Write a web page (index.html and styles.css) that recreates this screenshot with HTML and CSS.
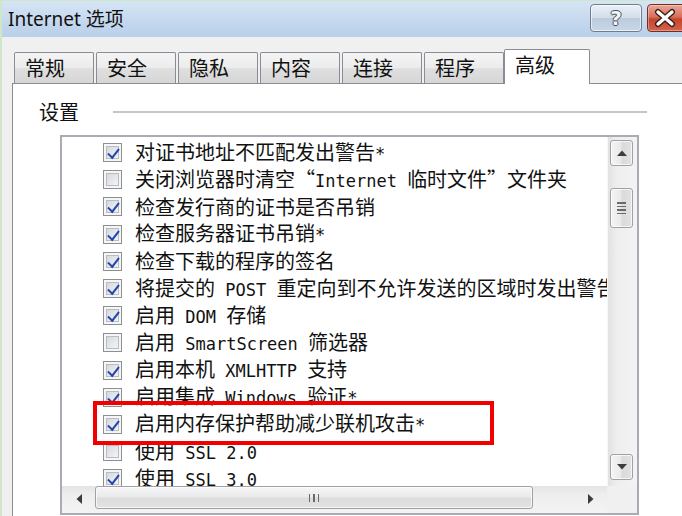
FILE: index.html
```html
<!DOCTYPE html>
<html lang="zh-CN">
<head>
<meta charset="utf-8">
<title>Internet 选项</title>
<link rel="stylesheet" href="styles.css">
</head>
<body>
<div class="window">
  <div class="titlebar">
    <span class="title">Internet 选项</span>
    <div class="caption-btns">
      <div class="cbtn help">?</div>
      <div class="cbtn close">
        <svg width="26" height="20" viewBox="0 0 26 20"><path d="M6 4 L20 16 M20 4 L6 16" stroke="#3a1a14" stroke-width="6" stroke-linecap="round"/><path d="M6 4 L20 16 M20 4 L6 16" stroke="#ffffff" stroke-width="3.4" stroke-linecap="round"/></svg>
      </div>
    </div>
  </div>
  <div class="content">
    <div class="tabs">
      <div class="tab">常规</div>
      <div class="tab">安全</div>
      <div class="tab">隐私</div>
      <div class="tab">内容</div>
      <div class="tab">连接</div>
      <div class="tab">程序</div>
      <div class="tab active">高级</div>
    </div>
    <div class="panel">
      <div class="group-head"><span class="group-label">设置</span><div class="rule"></div></div>
      <div class="listbox">
        <div class="items">
          <div class="row"><span class="cb on"></span><span class="t">对证书地址不匹配发出警告<span class="m">*</span></span></div>
          <div class="row"><span class="cb"></span><span class="t">关闭浏览器时清空“<span class="m">Internet </span>临时文件”文件夹</span></div>
          <div class="row"><span class="cb on"></span><span class="t">检查发行商的证书是否吊销</span></div>
          <div class="row"><span class="cb on"></span><span class="t">检查服务器证书吊销<span class="m">*</span></span></div>
          <div class="row"><span class="cb on"></span><span class="t">检查下载的程序的签名</span></div>
          <div class="row"><span class="cb on"></span><span class="t">将提交的<span class="m"> POST </span>重定向到不允许发送的区域时发出警告</span></div>
          <div class="row"><span class="cb on"></span><span class="t">启用<span class="m"> DOM </span>存储</span></div>
          <div class="row"><span class="cb"></span><span class="t">启用<span class="m"> SmartScreen </span>筛选器</span></div>
          <div class="row"><span class="cb on"></span><span class="t">启用本机<span class="m"> XMLHTTP </span>支持</span></div>
          <div class="row"><span class="cb on"></span><span class="t">启用集成<span class="m"> Windows </span>验证<span class="m">*</span></span></div>
          <div class="row"><span class="cb on"></span><span class="t">启用内存保护帮助减少联机攻击<span class="m">*</span></span></div>
          <div class="row"><span class="cb"></span><span class="t">使用<span class="m"> SSL 2.0</span></span></div>
          <div class="row"><span class="cb on"></span><span class="t">使用<span class="m"> SSL 3.0</span></span></div>
        </div>
        <div class="vscroll">
          <div class="sbtn vbtn"><svg width="12" height="8" viewBox="0 0 12 8"><path d="M1 7 L6 1.5 L11 7 Z" fill="#3c3c3c"/></svg></div>
          <div class="vthumb"><span></span><span></span><span></span><span></span></div>
          <div class="vfill"></div>
          <div class="sbtn vbtn"><svg width="12" height="8" viewBox="0 0 12 8"><path d="M1 1 L6 6.5 L11 1 Z" fill="#3c3c3c"/></svg></div>
        </div>
        <div class="hscroll">
          <div class="harrow"><svg width="8" height="12" viewBox="0 0 8 12"><path d="M7 1 L1.5 6 L7 11 Z" fill="#3c3c3c"/></svg></div>
          <div class="hthumb"><span></span><span></span><span></span></div>
          <div class="hfill"></div>
          <div class="harrow"><svg width="8" height="12" viewBox="0 0 8 12"><path d="M1 1 L6.5 6 L1 11 Z" fill="#3c3c3c"/></svg></div>
        </div>
        <div class="corner"></div>
        <div class="highlight"></div>
      </div>
    </div>
  </div>
</div>
</body>
</html>
```
FILE: styles.css
```css
* { box-sizing: border-box; margin: 0; padding: 0; }
html, body { width: 682px; height: 516px; overflow: hidden; }
body { background: #f0f0f0; font-family: "Noto Sans CJK SC", sans-serif; color: #000; }

.window {
  width: 682px; height: 516px;
  border-top: 1px solid #cfe6c9;
  border-left: 2px solid #cfe6c9;
  display: flex; flex-direction: column;
  overflow: hidden;
}

.titlebar {
  flex: none; height: 36px;
  background: linear-gradient(#d6e5f5, #c3d7ed 60%, #b9d0ea);
  display: flex; justify-content: space-between; align-items: flex-start;
}
.title {
  font-family: "Noto Sans", "Noto Sans CJK SC", sans-serif;
  font-size: 19px; line-height: 36px; padding-left: 6px; color: #111;
}
.caption-btns { display: flex; gap: 5px; margin-top: 3px; margin-right: -27px; }
.cbtn {
  height: 28px; border-radius: 4px;
  display: flex; align-items: center; justify-content: center;
}
.help {
  width: 52px;
  border: 1px solid #6f7d91;
  background: linear-gradient(#eaf0f7, #d3deea 48%, #bccbdd 52%, #c9d7e8);
  box-shadow: inset 0 0 0 1px rgba(255,255,255,0.6);
  font-family: "DejaVu Sans", sans-serif; font-weight: bold; font-size: 20px;
  color: #f4f4f4;
  text-shadow: 1px 0 0 #45505e, -1px 0 0 #45505e, 0 1px 0 #45505e, 0 -1px 0 #45505e;
}
.close {
  width: 62px;
  border: 1px solid #7a2a1e;
  background: linear-gradient(#e9a898, #d7705a 45%, #c5442c 55%, #d2654a);
  box-shadow: inset 0 0 0 1px rgba(255,255,255,0.35);
  justify-content: flex-start; padding-left: 4px;
}

.content { flex: 1; padding-top: 12px; padding-left: 10px; display: flex; flex-direction: column; }

.tabs { display: flex; align-items: flex-end; gap: 2px; padding-left: 2px; height: 34px; flex: none; }
.tab {
  width: 80px; height: 31px;
  border: 1px solid #898c95; border-bottom: none;
  border-radius: 2px 2px 0 0;
  background: linear-gradient(#f4f4f4, #ececec 50%, #dfdfdf 52%, #d6d6d6);
  font-size: 20px; line-height: 29px; padding-left: 10px;
  color: #111;
}
.tab.active {
  width: 86px; height: 35px; margin: 0 -2px -1px;
  background: #fff; position: relative; z-index: 1;
  line-height: 30px;
}

.panel {
  flex: 1; width: 720px;
  background: #fff;
  border-top: 1px solid #898c95;
  border-left: 1px solid #898c95;
  padding-top: 16px;
}
.group-head { display: flex; align-items: center; height: 24px; }
.group-label { font-size: 20px; line-height: 24px; margin-left: 26px; color: #111; }
.rule { width: 534px; height: 2px; background: #c6c6c6; margin-left: 34px; }

.listbox {
  position: relative;
  margin-top: 11px; margin-left: 47px;
  width: 579px; height: 380px;
  border: 2px solid #a9adb3;
  display: grid;
  grid-template-columns: 1fr 30px;
  grid-template-rows: 1fr 27px;
  overflow: hidden;
}
.items { padding-top: 2px; overflow: hidden; }
.row { height: 27.2px; display: flex; align-items: center; white-space: nowrap; }
.cb {
  flex: none; width: 19px; height: 19px; margin-left: 41px; margin-right: 13px;
  border: 1px solid #8e8f8f;
  background: linear-gradient(135deg, #cdd1d7, #e9ebee 60%, #f8f8f8);
  box-shadow: inset 0 0 0 2px #f6f6f6, inset 0 0 0 3px #b7bcc3;
  position: relative;
}
.cb.on::after {
  content: ""; position: absolute;
  width: 5px; height: 10px;
  border-right: 2.5px solid #2445ad; border-bottom: 2.5px solid #2445ad;
  transform: rotate(38deg) skewY(6deg);
  transform-origin: center;
  left: 6px; top: 2px;
}
.t { font-size: 20px; line-height: 26px; color: #111; }
.m { font-family: "DejaVu Sans Mono", monospace; font-size: 17px; white-space: pre; }

.vscroll {
  grid-column: 2; grid-row: 1;
  background: linear-gradient(to right, #e2e2e2, #eeeeee 30%, #f3f3f3);
  border-left: 1px solid #f7f7f7;
  display: flex; flex-direction: column;
  padding: 3px 4px 6px 2px;
}
.sbtn {
  border: 1px solid #9ea2a8; border-radius: 3px;
  background: linear-gradient(to right, #f5f5f5, #e9e9e9 45%, #dadada 55%, #e2e2e2);
  box-shadow: inset 0 0 0 1px rgba(255,255,255,0.7);
  display: flex; align-items: center; justify-content: center;
}
.vbtn { height: 26px; flex: none; }
.vthumb {
  margin-top: 22px; height: 40px; flex: none;
  border: 1px solid #9ea2a8; border-radius: 3px;
  background: linear-gradient(to right, #f5f5f5, #e9e9e9 45%, #dadada 55%, #e2e2e2);
  box-shadow: inset 0 0 0 1px rgba(255,255,255,0.7);
  display: flex; flex-direction: column; align-items: center; justify-content: center; gap: 2px;
}
.vthumb span { width: 9px; height: 1.5px; background: #6a6a6a; }
.vfill { flex: 1; }

.hscroll {
  grid-column: 1; grid-row: 2;
  background: linear-gradient(#e4e4e4, #eeeeee 30%, #f3f3f3);
  display: flex; align-items: flex-start;
}
.harrow { width: 33px; height: 25px; display: flex; align-items: center; justify-content: center; flex: none; }
.hthumb {
  width: 438px; height: 23px; flex: none;
  border: 1px solid #9ea2a8; border-radius: 3px;
  background: linear-gradient(#f6f6f6, #ebebeb 45%, #dcdcdc 55%, #e3e3e3);
  box-shadow: inset 0 0 0 1px rgba(255,255,255,0.7);
  display: flex; align-items: center; justify-content: center; gap: 3px;
}
.hthumb span { width: 1.5px; height: 8px; background: #6a6a6a; }
.hfill { flex: 1; }
.corner { grid-column: 2; grid-row: 2; background: #f0f0f0; }

.highlight {
  position: absolute; left: 31px; top: 264px;
  width: 401px; height: 44px;
  border: 4px solid #f20000;
  z-index: 2;
}
```
